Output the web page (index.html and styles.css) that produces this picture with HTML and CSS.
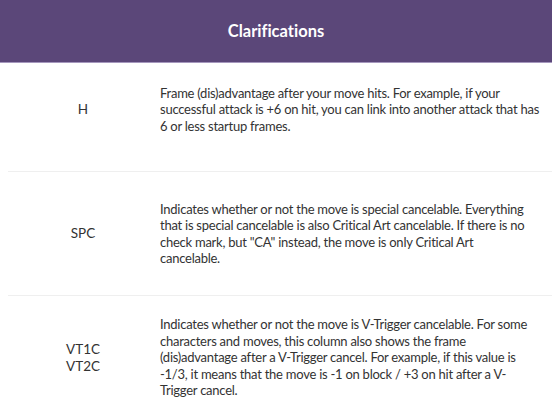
FILE: index.html
```html
<!DOCTYPE html>
<html>
<head>
<meta charset="utf-8">
<link rel="stylesheet" href="styles.css">
</head>
<body>
<header class="topbar"><h1 class="title">Clarifications</h1></header>
<main class="list">
  <div class="row">
    <div class="label">H</div>
    <div class="desc">Frame (dis)advantage after your move hits. For example, if your successful attack is +6 on hit, you can link into another attack that has 6 or less startup frames.</div>
  </div>
  <div class="row">
    <div class="label">SPC</div>
    <div class="desc">Indicates whether or not the move is special cancelable. Everything that is special cancelable is also Critical Art cancelable. If there is no check mark, but "CA" instead, the move is only Critical Art<br>cancelable.</div>
  </div>
  <div class="row">
    <div class="label">VT1C<br>VT2C</div>
    <div class="desc">Indicates whether or not the move is V-Trigger cancelable. For some characters and moves, this column also shows the frame (dis)advantage after a V-Trigger cancel. For example, if this value is -1/3, it means that the move is -1 on block / +3 on hit after a V-Trigger cancel.</div>
  </div>
</main>
</body>
</html>
```
FILE: styles.css
```css
html, body {
  margin: 0;
  padding: 0;
  background: #ffffff;
  overflow: hidden;
}
body {
  width: 552px;
  height: 414px;
  font-family: Lato, "Open Sans", sans-serif;
  color: #333333;
  font-variant-ligatures: none;
}
.topbar {
  position: relative;
  z-index: 1;
  height: 62px;
  background: #5b4779;
  border-bottom: 1px solid #a597bd;
  display: flex;
  align-items: center;
  justify-content: center;
}
.title {
  margin: 0;
  color: #ffffff;
  font-size: 16.5px;
  font-weight: 700;
}
.list {
  margin-top: -15px;
  margin-left: 8px;
}
.row {
  display: flex;
  align-items: center;
  height: 123px;
  border-bottom: 1px solid #efefef;
}
.label {
  width: 150px;
  flex: none;
  text-align: center;
  font-size: 13.5px;
  line-height: 17px;
}
.desc {
  flex: 1;
  padding-left: 2px;
  padding-right: 12px;
  font-size: 13px;
  letter-spacing: -0.25px;
  line-height: 16.5px;
}
```
